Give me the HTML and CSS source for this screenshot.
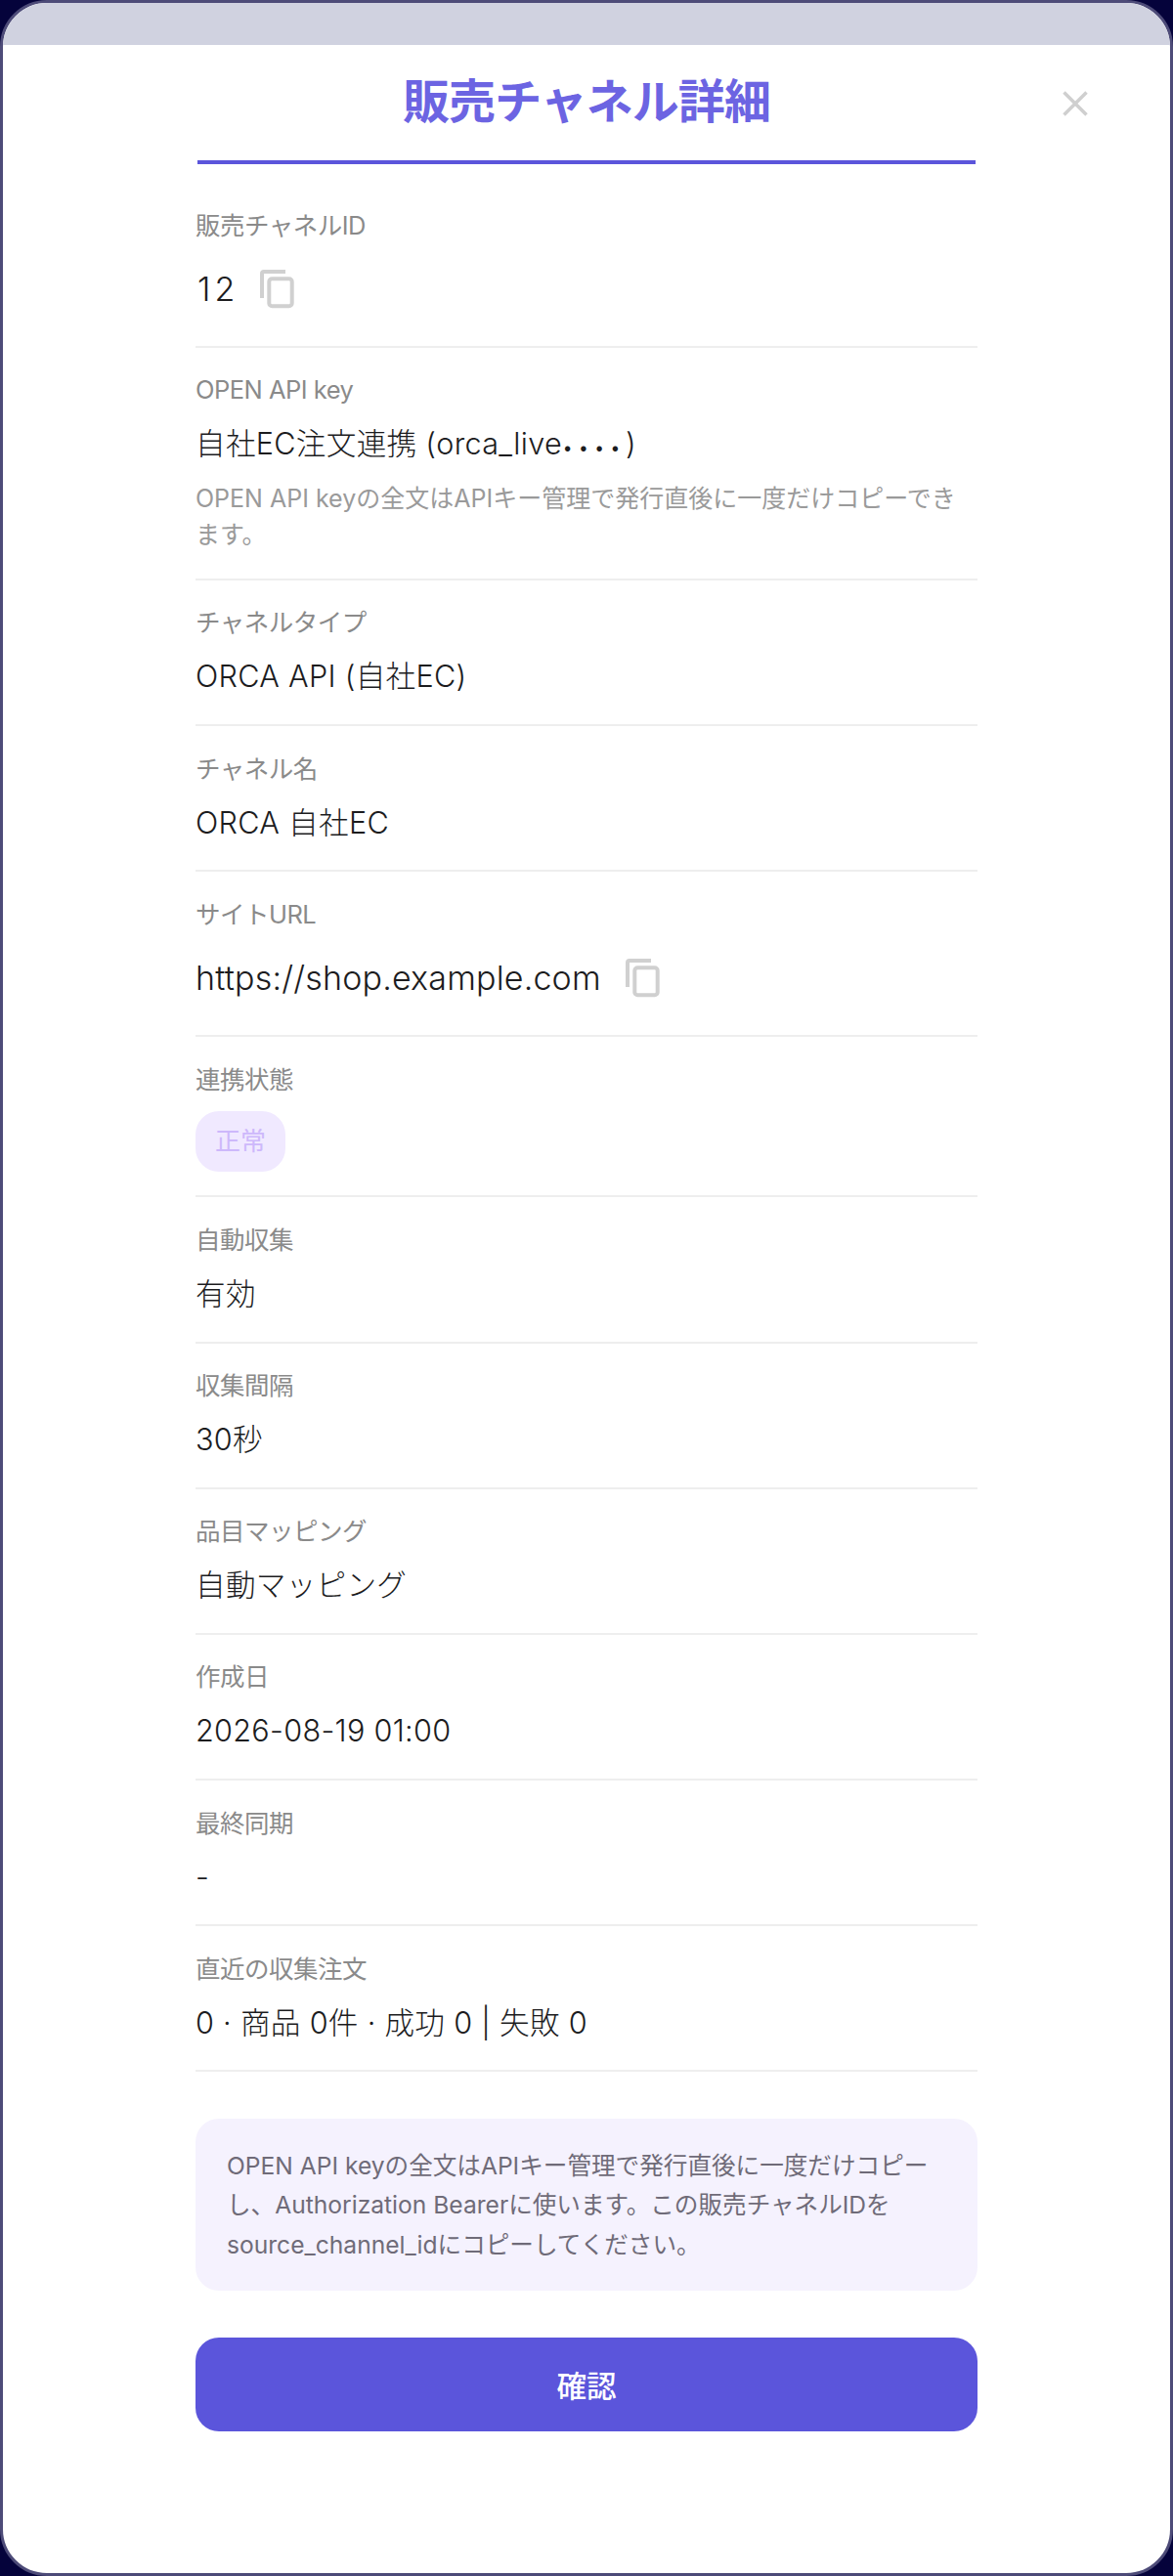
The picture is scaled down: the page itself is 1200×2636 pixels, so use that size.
FILE: index.html
```html
<!DOCTYPE html>
<html lang="ja">
    <head>
        <meta charset="UTF-8" />
        <meta name="viewport" content="width=device-width, initial-scale=1.0" />
        <title>販売チャネル詳細</title>
        <link rel="stylesheet" href="styles.css">
    </head>
    <body>
        <div class="modal">
            <div class="modal-top"></div>
            <div class="modal-head">
                <h2 class="modal-title">販売チャネル詳細</h2>
                <button class="close-btn" aria-label="close">
                    <svg width="26" height="26" viewBox="0 0 26 26"><path d="M1.5 1.5L24.5 24.5M24.5 1.5L1.5 24.5" /></svg>
                </button>
            </div>

            <div class="modal-body">
                <div class="row">
                    <p class="label">販売チャネルID</p>
                    <div class="value with-copy">
                        <span class="channel-id">12</span>
                        <svg class="copy-icon" width="35" height="40" viewBox="0 0 35 40"><path d="M2 29V4a2 2 0 0 1 2-2H26" /><rect x="9.3" y="9.3" width="23.4" height="28" rx="3" /></svg>
                    </div>
                </div>
                <div class="row row-key">
                    <p class="label">OPEN API key</p>
                    <p class="value">自社EC注文連携 (orca_live<span class="masked">••••</span>)</p>
                    <p class="hint">OPEN API keyの全文はAPIキー管理で発行直後に一度だけコピーできます。</p>
                </div>
                <div class="row">
                    <p class="label">チャネルタイプ</p>
                    <p class="value">ORCA API (自社EC)</p>
                </div>
                <div class="row">
                    <p class="label">チャネル名</p>
                    <p class="value">ORCA 自社EC</p>
                </div>
                <div class="row">
                    <p class="label">サイトURL</p>
                    <div class="value with-copy">
                        <span>https://shop.example.com</span>
                        <svg class="copy-icon" width="35" height="40" viewBox="0 0 35 40"><path d="M2 29V4a2 2 0 0 1 2-2H26" /><rect x="9.3" y="9.3" width="23.4" height="28" rx="3" /></svg>
                    </div>
                </div>
                <div class="row">
                    <p class="label">連携状態</p>
                    <span class="badge">正常</span>
                </div>
                <div class="row">
                    <p class="label">自動収集</p>
                    <p class="value">有効</p>
                </div>
                <div class="row">
                    <p class="label">収集間隔</p>
                    <p class="value">30秒</p>
                </div>
                <div class="row">
                    <p class="label">品目マッピング</p>
                    <p class="value">自動マッピング</p>
                </div>
                <div class="row">
                    <p class="label">作成日</p>
                    <p class="value">2026-08-19 01:00</p>
                </div>
                <div class="row">
                    <p class="label">最終同期</p>
                    <p class="value">-</p>
                </div>
                <div class="row">
                    <p class="label">直近の収集注文</p>
                    <p class="value">0 · 商品 0件 · 成功 0 | 失敗 0</p>
                </div>

                <div class="notice">OPEN API keyの全文はAPIキー管理で発行直後に一度だけコピーし、Authorization Bearerに使います。この販売チャネルIDをsource_channel_idにコピーしてください。</div>

                <button class="confirm-btn">確認</button>
            </div>
        </div>
    </body>
</html>
```

FILE: styles.css
```css
* {
    box-sizing: border-box;
}

html,
body {
    margin: 0;
    padding: 0;
    background-color: #05033b;
}

body {
    height: 2636px;
    overflow: hidden;
    font-family: Inter, "Noto Sans CJK JP", sans-serif;
}

p {
    margin: 0;
}

.modal {
    height: 2636px;
    background-color: #fff;
    border: 3px solid #4d4b78;
    border-radius: 48px;
    overflow: hidden;
}

.modal-top {
    height: 43px;
    background-color: #d0d2e0;
}

.modal-head {
    position: relative;
    width: 796px;
    margin: 0 0 0 199px;
    padding-top: 25px;
    height: 122px;
    border-bottom: 4px solid #5b55db;
    text-align: center;
}

.modal-title {
    margin: 0;
    font-size: 48px;
    line-height: 66px;
    font-weight: 700;
    letter-spacing: -0.02em;
    color: #6c64e2;
}

.close-btn {
    position: absolute;
    top: 47px;
    right: -115px;
    padding: 0;
    border: none;
    background: none;
}

.close-btn svg {
    display: block;
    fill: none;
    stroke: #cfcfcf;
    stroke-width: 3.5;
}

.modal-body {
    width: 800px;
    margin-left: 197px;
    padding-top: 19px;
}

.row {
    padding: 24.5px 0 23.7px;
    border-bottom: 2px solid #eeeeee;
}

.label {
    font-size: 25.5px;
    line-height: 38px;
    letter-spacing: -0.02em;
    color: #8a8a8a;
}

.value {
    margin-top: 11px;
    font-size: 30.6px;
    line-height: 50px;
    font-weight: 300;
    letter-spacing: 0.3px;
    color: #1c1c1e;
}

.masked {
    font-size: 20px;
    letter-spacing: 5px;
}

.value.with-copy {
    display: flex;
    align-items: center;
    gap: 25px;
    height: 68px;
    margin-top: 12px;
    margin-bottom: 0.8px;
    font-size: 34px;
    letter-spacing: 0.18px;
}

.channel-id {
    padding-left: 2px;
    margin-right: -3px;
    letter-spacing: 4px;
}

.copy-icon {
    fill: none;
    stroke: #d0d0d0;
    stroke-width: 4;
}

.row-key {
    padding-bottom: 25.5px;
}

.hint {
    margin-top: 9px;
    font-size: 25px;
    line-height: 37px;
    color: #9a9a9a;
}

.badge {
    display: inline-block;
    margin-top: 13.5px;
    margin-bottom: 0.3px;
    padding: 0 20px;
    height: 62px;
    line-height: 62px;
    font-size: 26px;
    border-radius: 24px;
    background-color: #f0e9ff;
    color: #cdb8fb;
}

.notice {
    margin-top: 48px;
    padding: 27.5px 32px;
    font-size: 24.6px;
    line-height: 40.3px;
    color: #6f6b78;
    background-color: #f5f2fe;
    border-radius: 24px;
}

.confirm-btn {
    display: block;
    width: 100%;
    height: 96px;
    margin-top: 48px;
    border: none;
    border-radius: 24px;
    font-family: inherit;
    font-size: 30.6px;
    font-weight: 500;
    color: #fff;
    background-color: #5b55db;
}
```
